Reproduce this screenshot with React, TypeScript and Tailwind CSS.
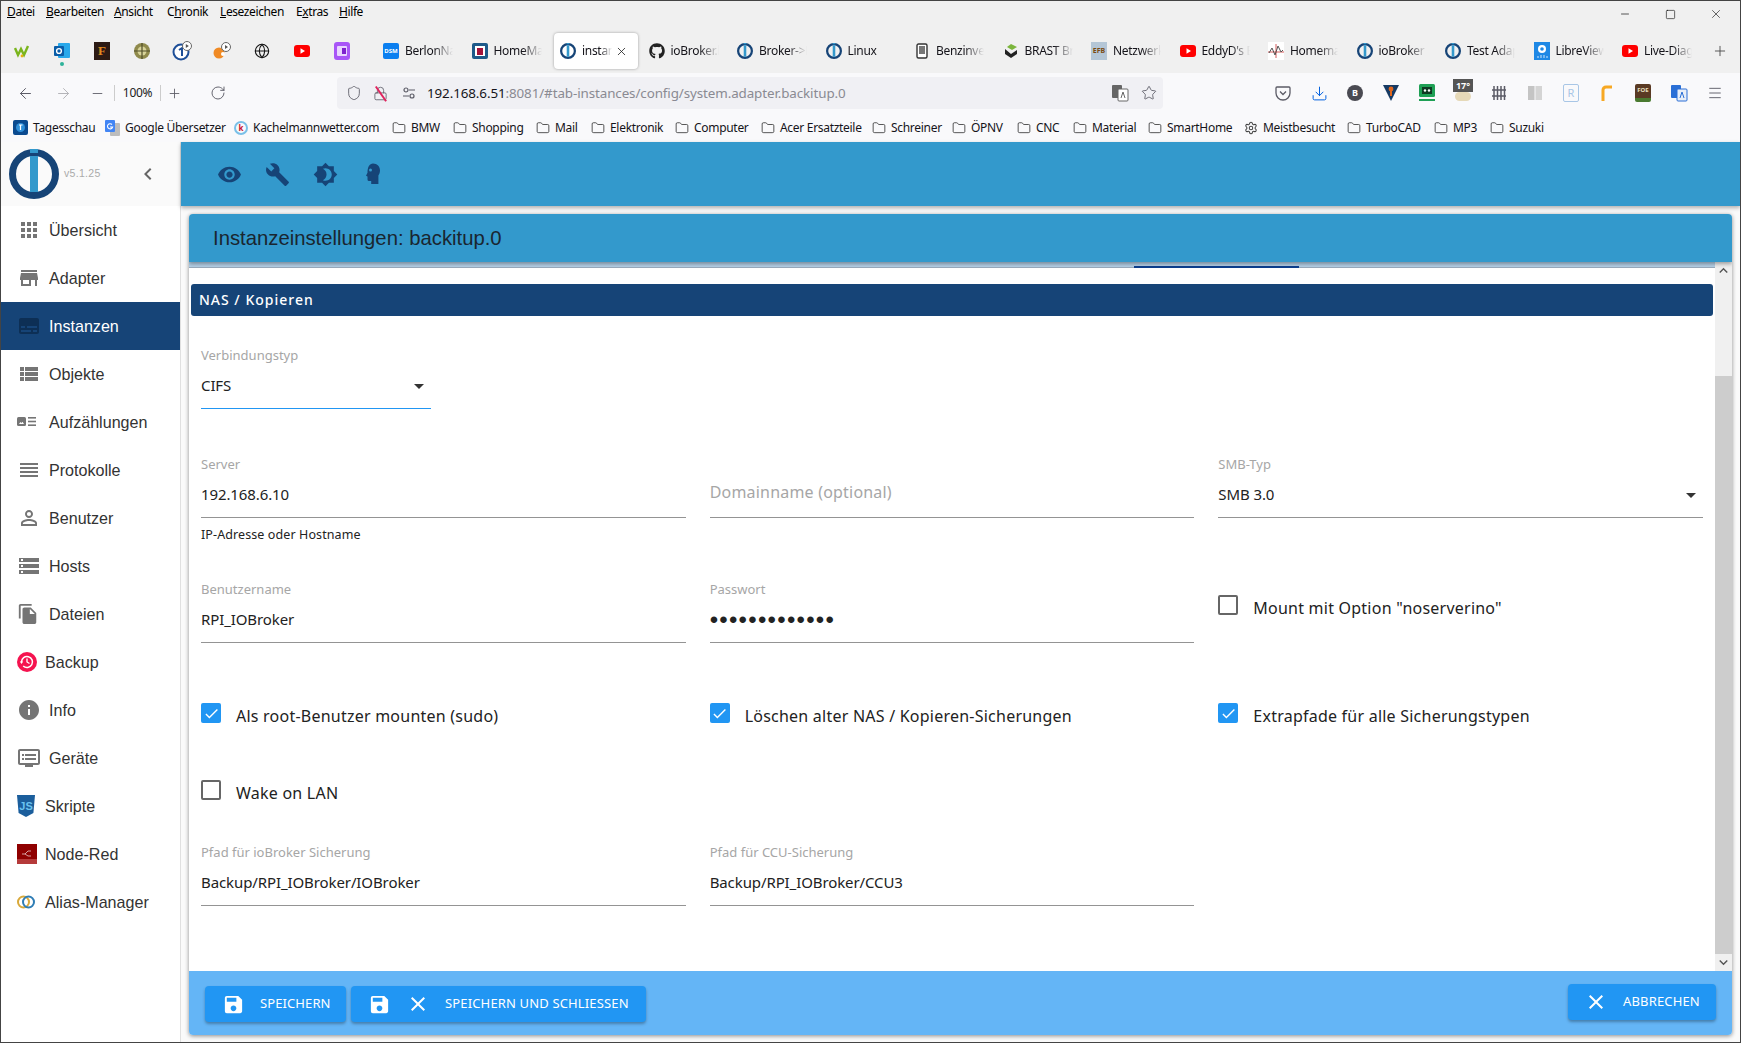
import { ArrowLeft, ArrowRight, Minus, Plus, RotateCw, Shield, Lock, Star, Download, Menu, Folder, Settings, X, Square, Globe } from 'lucide-react';
import { FaGithub } from 'react-icons/fa';
import {
  MdApps, MdStore, MdSubtitles, MdViewList, MdStorage, MdFileCopy, MdInfo, MdDvr, MdPersonOutline, MdReorder,
  MdVisibility, MdBuild, MdBrightness4, MdSave, MdClose, MdArrowDropDown, MdChevronLeft, MdCheck, MdKeyboardArrowUp, MdKeyboardArrowDown,
} from 'react-icons/md';

const chromeFont = "font-['Noto_Sans',sans-serif]";
const formFont = "font-['Noto_Sans',sans-serif]";

function IoLogo({ size = 16 }: { size?: number }) {
  return (
    <svg width={size} height={size} viewBox="0 0 50 50">
      <circle cx="25" cy="25" r="21.5" fill="none" stroke="#164477" strokeWidth="7" />
      <rect x="21" y="0" width="8" height="4" fill="#3399cc" />
      <rect x="21" y="7" width="8" height="36" fill="#3399cc" />
    </svg>
  );
}

function Yt() {
  return (
    <svg width="16" height="16" viewBox="0 0 16 16">
      <rect x="0" y="2" width="16" height="12" rx="3" fill="#f00" />
      <path d="M6.5 5.2 11 8l-4.5 2.8z" fill="#fff" />
    </svg>
  );
}

function TabIcon({ kind }: { kind: string }) {
  if (kind === 'io') return <IoLogo />;
  if (kind === 'yt') return <Yt />;
  if (kind === 'gh') return <FaGithub size={16} color="#222" />;
  if (kind === 'dsm')
    return <div className="w-4 h-4 bg-[#0b7ff0] rounded-[2px] text-white text-[6px] leading-4 text-center font-bold">DSM</div>;
  if (kind === 'home')
    return (
      <svg width="16" height="16" viewBox="0 0 16 16">
        <rect width="16" height="16" rx="2" fill="#1d5a8a" />
        <rect x="3" y="3" width="10" height="10" fill="#fff" />
        <rect x="5" y="5" width="6" height="7" fill="#a3123a" />
      </svg>
    );
  if (kind === 'benzin')
    return (
      <svg width="16" height="16" viewBox="0 0 16 16">
        <rect x="3" y="1" width="10" height="14" rx="1.5" fill="#fff" stroke="#333" strokeWidth="1.4" />
        <rect x="5" y="3" width="6" height="8" fill="#777" />
      </svg>
    );
  if (kind === 'brast')
    return (
      <svg width="16" height="16" viewBox="0 0 16 16">
        <path d="M8 1 14 4 9 7 4 4z" fill="#7bb53c" />
        <path d="M2 6 2 11 8 15 14 11 14 7 8 11z" fill="#222" />
      </svg>
    );
  if (kind === 'efb')
    return <div className="w-4 h-[18px] bg-[#b4c6d6] text-[#7a4a10] text-[7px] leading-[18px] text-center font-bold">EFB</div>;
  if (kind === 'h24')
    return (
      <svg width="16" height="18" viewBox="0 0 16 18">
        <rect width="16" height="18" fill="#fff" />
        <path d="M0 10h16M8 2v14" stroke="#c33" strokeWidth="0.8" />
        <path d="M1 11l3-5 3 7 3-9 3 6 2-2" fill="none" stroke="#555" strokeWidth="1" />
      </svg>
    );
  if (kind === 'libre')
    return (
      <svg width="16" height="18" viewBox="0 0 16 18">
        <rect width="16" height="18" fill="#1e88e5" />
        <circle cx="8" cy="7" r="4" fill="#fff" />
        <circle cx="8" cy="7" r="1.8" fill="#1e88e5" />
        <path d="M4 16v-2M7 16v-3M10 16v-3M13 16v-2" stroke="#cfe6fb" strokeWidth="1" />
      </svg>
    );
  return null;
}

const pinned = [
  <svg key="w" width="16" height="16" viewBox="0 0 16 16"><path d="M1 5l3 7 3-6 3 6 4-9" fill="none" stroke="#7ab51d" strokeWidth="2.4" /><circle cx="8" cy="13" r="1.4" fill="#e8b010" /></svg>,
  <div key="o" className="relative"><svg width="18" height="18" viewBox="0 0 18 18"><rect x="5" y="1" width="12" height="15" rx="1" fill="#28a8ea" /><rect x="1" y="4" width="10" height="10" rx="1" fill="#0a5da8" /><circle cx="6" cy="9" r="2.4" fill="none" stroke="#fff" strokeWidth="1.4" /></svg><span className="absolute left-[7px] top-[20px] w-1 h-1 rounded-full bg-[#2fb39a]" /></div>,
  <div key="f" className="w-4 h-[18px] bg-[#2c1a14] text-[#e08a20] text-[13px] leading-[18px] text-center font-bold font-['Liberation_Serif',serif]">F</div>,
  <svg key="g" width="18" height="18" viewBox="0 0 18 18"><circle cx="9" cy="9" r="8" fill="#8f8a4c" /><circle cx="9" cy="9" r="4.5" fill="#d8d49a" /><path d="M9 1v16M1 9h16" stroke="#514f2a" strokeWidth="1.2" /></svg>,
  <svg key="p1" width="20" height="20" viewBox="0 0 20 20"><circle cx="9" cy="11" r="7.5" fill="#fff" stroke="#1e4f98" strokeWidth="2" /><path d="M7 9l3-2v8" fill="none" stroke="#1e4f98" strokeWidth="2" /><circle cx="15" cy="5" r="4.5" fill="#fff" stroke="#666" /><path d="M13.8 3l3 2-3 2z" fill="#555" /></svg>,
  <svg key="p2" width="20" height="20" viewBox="0 0 20 20"><circle cx="7" cy="12" r="5.5" fill="#f08a24" /><circle cx="11" cy="13" r="2" fill="#fff" /><circle cx="14" cy="6" r="4.5" fill="#fff" stroke="#666" /><path d="M13 4l3 2-3 2z" fill="#555" /></svg>,
  <Globe key="gl" size={16} color="#111" strokeWidth={1.6} />,
  <Yt key="y" />,
  <svg key="pu" width="16" height="18" viewBox="0 0 16 18"><rect width="16" height="18" rx="3" fill="#a855f7" /><rect x="3" y="4" width="10" height="10" rx="1" fill="#e9d5ff" /><rect x="8" y="6" width="4" height="6" fill="#7e22ce" /></svg>,
];

const tabs = [
  { icon: 'dsm', label: 'BerlonNas' },
  { icon: 'home', label: 'HomeMatic' },
  { icon: 'io', label: 'instanzen', active: true },
  { icon: 'gh', label: 'ioBroker.backitup' },
  { icon: 'io', label: 'Broker->Forum' },
  { icon: 'io', label: 'Linux' },
  { icon: 'benzin', label: 'Benzinvergleich' },
  { icon: 'brast', label: 'BRAST Bremse' },
  { icon: 'efb', label: 'Netzwerk' },
  { icon: 'yt', label: "EddyD's Blog" },
  { icon: 'h24', label: 'Homematic' },
  { icon: 'io', label: 'ioBroker' },
  { icon: 'io', label: 'Test Adapter' },
  { icon: 'libre', label: 'LibreView' },
  { icon: 'yt', label: 'Live-Diagramm' },
];

const folders = [
  { label: 'BMW', w: 'w-[61px]' },
  { label: 'Shopping', w: 'w-[83px]' },
  { label: 'Mail', w: 'w-[55px]' },
  { label: 'Elektronik', w: 'w-[84px]' },
  { label: 'Computer', w: 'w-[86px]' },
  { label: 'Acer Ersatzteile', w: 'w-[111px]' },
  { label: 'Schreiner', w: 'w-[80px]' },
  { label: 'ÖPNV', w: 'w-[65px]' },
  { label: 'CNC', w: 'w-[56px]' },
  { label: 'Material', w: 'w-[75px]' },
  { label: 'SmartHome', w: 'w-[96px]' },
];

const folders2 = [
  { label: 'TurboCAD', w: 'w-[87px]' },
  { label: 'MP3', w: 'w-[56px]' },
  { label: 'Suzuki', w: 'w-[60px]' },
];

function Bookmark({ label, w, icon }: { label: string; w: string; icon?: React.ReactNode }) {
  return (
    <div className={`${w} flex items-center gap-[5px] shrink-0`}>
      {icon ?? <Folder size={14} strokeWidth={1.3} color="#222" className="shrink-0" />}
      <span className="text-[12px] tracking-[-0.3px] text-[#15141a] whitespace-nowrap">{label}</span>
    </div>
  );
}

function ToolIcon({ children }: { children: React.ReactNode }) {
  return <div className="w-[36px] h-[32px] flex items-center justify-center shrink-0">{children}</div>;
}

function BrowserChrome() {
  return (
    <div className={`${chromeFont} shrink-0`}>
      <div className="h-[72px] bg-[#f0f0f0] flex flex-col">
        <div className="h-[21px] shrink-0 flex items-center justify-between">
          <div className="flex text-[12px] tracking-[-0.4px] text-black pl-[6px]">
            <span className="w-[39px]"><u>D</u>atei</span>
            <span className="w-[68px]"><u>B</u>earbeiten</span>
            <span className="w-[53px]"><u>A</u>nsicht</span>
            <span className="w-[53px]">C<u>h</u>ronik</span>
            <span className="w-[76px]"><u>L</u>esezeichen</span>
            <span className="w-[43px]">E<u>x</u>tras</span>
            <span><u>H</u>ilfe</span>
          </div>
          <div className="flex items-center text-black pr-[17px] mt-[5px]">
            <Minus size={12} strokeWidth={1.3} className="mr-[34px]" />
            <Square size={11} strokeWidth={1.3} className="mr-[33px]" />
            <X size={14} strokeWidth={1} />
          </div>
        </div>
        <div className="h-[36px] mt-[11px] shrink-0 flex items-center pl-[1px]">
          {pinned.map((icon, i) => (
            <div key={i} className="w-[40px] h-[36px] flex items-center justify-center shrink-0">{icon}</div>
          ))}
          <div className="w-[15px] shrink-0" />
          {tabs.map((t) => (
            <div
              key={t.label}
              className={`w-[84px] mr-[4.5px] h-[36px] shrink-0 flex items-center pl-[6px] gap-[6px] rounded-[4px] relative ${t.active ? 'bg-white shadow-[0_0_3px_rgba(0,0,0,0.35)]' : ''}`}
            >
              <div className="w-4 flex justify-center shrink-0"><TabIcon kind={t.icon} /></div>
              <span className={`text-[12px] text-[#15141a] tracking-[-0.3px] whitespace-nowrap overflow-hidden ${t.active ? 'w-[30px]' : 'w-[48px]'} [mask-image:linear-gradient(to_right,black_60%,transparent)]`}>
                {t.label}
              </span>
              {t.active && <X size={13} strokeWidth={1.5} color="#222" className="absolute right-[10px]" />}
            </div>
          ))}
          <Plus size={16} strokeWidth={1.3} color="#444" className="ml-[7px]" />
        </div>
      </div>
      <div className="h-[40px] bg-[#f9f9fb] flex items-center text-[#5b5b66]">
        <ArrowLeft size={17} strokeWidth={1.4} className="ml-[16px]" />
        <ArrowRight size={17} strokeWidth={1.4} color="#b4b4b8" className="ml-[21px]" />
        <Minus size={15} strokeWidth={1.4} className="ml-[18px]" />
        <div className="w-px h-[16px] bg-[#ccc] ml-[9px]" />
        <span className="w-[45px] text-center text-[12px] tracking-[-0.3px] text-[#222]">100%</span>
        <div className="w-px h-[16px] bg-[#ccc]" />
        <Plus size={15} strokeWidth={1.4} className="ml-[6px]" />
        <RotateCw size={16} strokeWidth={1.4} className="ml-[28px]" />
        <div className="ml-[111px] w-[826px] h-[32px] bg-[#f0f0f4] rounded-[4px] flex items-center">
          <Shield size={16} strokeWidth={1.3} className="ml-[9px]" />
          <div className="relative ml-[11px]">
            <Lock size={15} strokeWidth={1.3} />
            <div className="absolute left-[7px] -top-[1px] w-[1.5px] h-[18px] bg-[#e0245e] -rotate-[35deg]" />
          </div>
          <svg width="16" height="16" viewBox="0 0 16 16" className="ml-[13px]" fill="none" stroke="#5b5b66" strokeWidth="1.2">
            <path d="M8 5h6M2 11h6" />
            <circle cx="5" cy="5" r="2" />
            <circle cx="11" cy="11" r="2" />
          </svg>
          <span className="ml-[10px] mt-[1px] text-[13.4px] tracking-[-0.1px] text-[#15141a] whitespace-nowrap">
            192.168.6.51<span className="text-[#8a8a92]">:8081/#tab-instances/config/system.adapter.backitup.0</span>
          </span>
          <div className="ml-auto flex items-center gap-[12px] pr-[6px]">
            <svg width="18" height="18" viewBox="0 0 18 18">
              <rect x="1" y="1" width="10" height="13" rx="1" fill="#666" />
              <rect x="7" y="5" width="10" height="12" rx="1" fill="#fff" stroke="#666" />
              <path d="M10 14l2-6 2 6" fill="none" stroke="#666" />
            </svg>
            <Star size={16} strokeWidth={1.3} />
          </div>
        </div>
        <div className="ml-[102px] flex items-center">
          <ToolIcon><svg width="16" height="16" viewBox="0 0 16 16" fill="none" stroke="#5b5b66" strokeWidth="1.3"><path d="M2 2h12a1 1 0 0 1 1 1v5a7 7 0 0 1-14 0V3a1 1 0 0 1 1-1z" /><path d="M5 6.5 8 9.5 11 6.5" /></svg></ToolIcon>
          <ToolIcon><Download size={17} strokeWidth={1.4} color="#0060df" /></ToolIcon>
          <ToolIcon><div className="w-4 h-4 rounded-full bg-[#4a4a52] text-white text-[9px] leading-4 text-center font-bold">B</div></ToolIcon>
          <ToolIcon><svg width="16" height="18" viewBox="0 0 16 18"><path d="M0 1h16L8 17z" fill="#173a63" /><circle cx="8" cy="5" r="2.4" fill="#e0661b" /><rect x="7" y="5" width="2" height="7" fill="#e0661b" /></svg></ToolIcon>
          <ToolIcon><svg width="16" height="18" viewBox="0 0 16 18"><rect width="16" height="13" rx="1.5" fill="#1fa055" /><rect x="3" y="3" width="10" height="7" fill="#0f3a22" /><circle cx="6" cy="6.5" r="1.2" fill="#fff" /><circle cx="10" cy="6.5" r="1.2" fill="#fff" /><rect y="15" width="16" height="2" fill="#1fa055" /></svg></ToolIcon>
          <ToolIcon>
            <div className="flex flex-col items-center -mt-[6px]">
              <div className="w-[20px] h-[13px] bg-[#555] text-white text-[9px] leading-[13px] text-center font-bold">17°</div>
              <div className="w-[16px] h-[9px] bg-[#e6d9b8] rounded-full" />
            </div>
          </ToolIcon>
          <ToolIcon><svg width="16" height="16" viewBox="0 0 16 16" stroke="#5b5b66" strokeWidth="1.5"><path d="M3 1v14M6.5 1v14M10 1v14M13.5 1v14M1 5h14M1 11h14" /></svg></ToolIcon>
          <ToolIcon><svg width="16" height="16" viewBox="0 0 16 16"><rect x="1" y="1" width="6.5" height="14" fill="#c4c4c4" /><rect x="8.5" y="1" width="6.5" height="14" fill="#d4d4d4" /></svg></ToolIcon>
          <ToolIcon><div className="w-[16px] h-[18px] rounded-[2px] border border-[#a8c6e6] text-[#a8c6e6] text-[11px] leading-[16px] text-center">R</div></ToolIcon>
          <ToolIcon><svg width="14" height="18" viewBox="0 0 14 18" fill="none" stroke="#f7a823" strokeWidth="3"><path d="M3 17V6a3 3 0 0 1 3-3h6" /></svg></ToolIcon>
          <ToolIcon><div className="w-[16px] h-[18px] rounded-[2px] bg-[#5a3a24] text-[#e8e0c0] text-[6px] leading-[12px] text-center font-bold border-b-[4px] border-[#4a7a30]">FOE</div></ToolIcon>
          <ToolIcon><svg width="18" height="18" viewBox="0 0 18 18"><rect x="1" y="1" width="10" height="13" rx="1" fill="#2a6fd6" /><rect x="7" y="5" width="10" height="12" rx="1" fill="#e8eef8" stroke="#2a6fd6" /><path d="M10 14l2-6 2 6" fill="none" stroke="#2a6fd6" /></svg></ToolIcon>
          <ToolIcon><Menu size={16} strokeWidth={1.4} /></ToolIcon>
        </div>
      </div>
      <div className="h-[29px] bg-[#f9f9fb] flex items-center pl-[12px]">
        <Bookmark label="Tagesschau" w="w-[92px]" icon={<svg width="15" height="15" viewBox="0 0 15 15" className="shrink-0"><rect width="15" height="15" rx="2" fill="#0a4a8f" /><circle cx="7.5" cy="7.5" r="4.5" fill="#2f8fd8" /><path d="M6 5h3.5M7.5 5v5" stroke="#fff" strokeWidth="1.2" /></svg>} />
        <Bookmark label="Google Übersetzer" w="w-[129px]" icon={<svg width="15" height="16" viewBox="0 0 15 16" className="shrink-0"><rect x="5" y="3" width="10" height="13" rx="1" fill="#bdbdbd" /><rect x="0" y="0" width="10" height="12" rx="1" fill="#4285f4" /><path d="M7 4.5A2.6 2.6 0 1 0 7.6 7H5" fill="none" stroke="#fff" strokeWidth="1.1" /></svg>} />
        <Bookmark label="Kachelmannwetter.com" w="w-[158px]" icon={<div className="w-[14px] h-[14px] rounded-full border-2 border-[#7ac0e8] text-[#c8102e] text-[8px] leading-[10px] text-center font-bold shrink-0">k</div>} />
        {folders.map((f) => <Bookmark key={f.label} label={f.label} w={f.w} />)}
        <Bookmark label="Meistbesucht" w="w-[103px]" icon={<Settings size={14} strokeWidth={1.8} color="#444" className="shrink-0" />} />
        {folders2.map((f) => <Bookmark key={f.label} label={f.label} w={f.w} />)}
      </div>
    </div>
  );
}

function BackupIcon() {
  return (
    <svg width="20" height="20" viewBox="0 0 20 20" className="shrink-0">
      <circle cx="10" cy="10" r="10" fill="#f5134f" />
      <path d="M4.5 10a5.5 5.5 0 1 1 1.7 4" fill="none" stroke="#fff" strokeWidth="1.5" />
      <path d="M2.8 9.5h3.4L4.5 12z" fill="#fff" />
      <path d="M10 6.5V10l2.5 1.5" fill="none" stroke="#fff" strokeWidth="1.3" />
    </svg>
  );
}

function EnumIcon() {
  return (
    <svg width="20" height="20" viewBox="0 0 20 20" fill="#757575">
      <rect x="0" y="5" width="9" height="9" rx="1.5" />
      <path d="M2 12l1.5-2 1 1 1-1.2L7 12z" fill="#fff" />
      <rect x="11" y="5" width="8" height="1.6" />
      <rect x="11" y="8.7" width="8" height="1.6" />
      <rect x="11" y="12.4" width="8" height="1.6" />
    </svg>
  );
}

function JsIcon() {
  return (
    <svg width="18" height="22" viewBox="0 0 18 22" className="shrink-0">
      <path d="M0 0h18l-1.6 18L9 22l-7.4-4z" fill="#1b5e9c" />
      <text x="9" y="15" textAnchor="middle" fontSize="11" fontWeight="700" fill="#6bc3f0" fontFamily="Liberation Sans, sans-serif">JS</text>
    </svg>
  );
}

function NodeRedIcon() {
  return (
    <svg width="20" height="20" viewBox="0 0 20 20" className="shrink-0">
      <rect width="20" height="20" fill="#8f0000" />
      <rect y="15" width="20" height="5" fill="#b53a3a" />
      <path d="M5 10h3l3-3h3M8 10l3 2h3" fill="none" stroke="#e8c8c8" strokeWidth="0.8" />
    </svg>
  );
}

function AliasIcon() {
  return (
    <svg width="18" height="16" viewBox="0 0 18 16" className="shrink-0">
      <circle cx="6.5" cy="8" r="5.5" fill="none" stroke="#d9a93a" strokeWidth="2" />
      <circle cx="11.5" cy="8" r="5.5" fill="none" stroke="#2f7db5" strokeWidth="2" />
    </svg>
  );
}

const navItems: { label: string; icon: React.ReactNode; narrow?: boolean; active?: boolean }[] = [
  { label: 'Übersicht', icon: <MdApps size={24} /> },
  { label: 'Adapter', icon: <MdStore size={24} /> },
  { label: 'Instanzen', icon: <MdSubtitles size={24} color="#0d2f55" />, active: true },
  { label: 'Objekte', icon: <MdViewList size={24} /> },
  { label: 'Aufzählungen', icon: <EnumIcon /> },
  { label: 'Protokolle', icon: <MdReorder size={24} /> },
  { label: 'Benutzer', icon: <MdPersonOutline size={24} /> },
  { label: 'Hosts', icon: <MdStorage size={24} /> },
  { label: 'Dateien', icon: <MdFileCopy size={22} /> },
  { label: 'Backup', icon: <BackupIcon />, narrow: true },
  { label: 'Info', icon: <MdInfo size={24} /> },
  { label: 'Geräte', icon: <MdDvr size={24} /> },
  { label: 'Skripte', icon: <JsIcon />, narrow: true },
  { label: 'Node-Red', icon: <NodeRedIcon />, narrow: true },
  { label: 'Alias-Manager', icon: <AliasIcon />, narrow: true },
];

function Sidebar() {
  return (
    <aside className="w-[180px] shrink-0 bg-white border-r border-[#e0e0e0] flex flex-col font-['Liberation_Sans',sans-serif]">
      <div className="h-[64px] bg-[#fafafa] flex items-center relative shrink-0">
        <div className="ml-[8px]"><IoLogo size={50} /></div>
        <span className="ml-[5px] text-[10.5px] tracking-[0.3px] text-[#aaa]">v5.1.25</span>
        <MdChevronLeft size={24} color="#666" className="absolute left-[135px]" />
      </div>
      {navItems.map((n) => (
        <div
          key={n.label}
          className={`h-[48px] shrink-0 flex items-center pl-[16px] ${n.active ? 'bg-[#164477] text-white w-[179px]' : 'text-[#333]'}`}
        >
          <div className={`${n.narrow ? 'w-[28px]' : 'w-[32px]'} shrink-0 text-[#757575] flex items-center`}>{n.icon}</div>
          <span className="text-[16.1px]">{n.label}</span>
        </div>
      ))}
    </aside>
  );
}

function Field({ label, value, placeholder, password, select, className = '' }: {
  label?: string; value?: string; placeholder?: string; password?: boolean; select?: boolean; className?: string;
}) {
  return (
    <div className={className}>
      <div className="h-[16px] text-[13px] leading-[16px] text-[#a6a6a6]">{label}</div>
      <div className="h-[46px] border-b border-[#949494] flex items-center justify-between">
        {placeholder ? (
          <span className="text-[16px] tracking-[0.2px] text-[#a6a6a6] -mt-[6px]">{placeholder}</span>
        ) : password ? (
          <span className="text-[24px] leading-none tracking-[1.25px] mt-[1px] text-[#222] font-['Liberation_Sans',sans-serif]">{value}</span>
        ) : (
          <span className="text-[15px] tracking-[-0.1px] text-[#222]">{value}</span>
        )}
        {select && <MdArrowDropDown size={24} color="#333" />}
      </div>
    </div>
  );
}

function Check({ label, checked, className = '' }: { label: string; checked?: boolean; className?: string }) {
  return (
    <div className={`flex items-center h-[20px] ${className}`}>
      {checked ? (
        <div className="w-[20px] h-[20px] rounded-[2px] bg-[#2196f3] flex items-center justify-center shrink-0">
          <MdCheck size={17} color="#fff" />
        </div>
      ) : (
        <div className="w-[20px] h-[20px] rounded-[2px] border-2 border-[#666] shrink-0" />
      )}
      <span className="ml-[15px] mt-[5px] text-[16px] tracking-[0.23px] text-[#222] whitespace-nowrap">{label}</span>
    </div>
  );
}

function Dialog() {
  return (
    <div className="mx-[8px] mt-[8px] mb-[7px] flex-1 min-h-0 flex flex-col rounded-[4px] bg-white shadow-[0_1px_4px_rgba(0,0,0,0.45)] overflow-hidden">
      <div className="h-[48px] shrink-0 bg-[#3399cc] flex items-center pl-[24px] text-[20.3px] text-[#1a2630] font-['Liberation_Sans',sans-serif] shadow-[0_2px_4px_rgba(0,0,0,0.35)] relative z-10">
        Instanzeinstellungen: backitup.0
      </div>
      <div className="flex-1 min-h-0 flex">
        <div className={`flex-1 min-w-0 ${formFont}`}>
          <div className="h-[6px] bg-[#b5d1e8] flex border-b border-[#9ab]">
            <div className="ml-[945px] w-[165px] h-[2px] mt-[4px] bg-[#0d3f8f]" />
          </div>
          <div className="mt-[16px] ml-[2px] mr-[2px] h-[32px] bg-[#164477] rounded-[3px] flex items-center pl-[8px] pb-[2px] text-[14px] tracking-[1px] text-white font-medium">
            NAS / Kopieren
          </div>
          <div className="px-[12px] pt-[31px]">
            <Field label="Verbindungstyp" value="CIFS" select className="w-[230px] [&>div:last-child]:border-[#2196f3]" />
            <div className="grid grid-cols-3 gap-x-6 mt-[47px]">
              <div>
                <Field label="Server" value="192.168.6.10" />
                <div className="mt-[9px] h-[16px] text-[12.5px] tracking-[0.1px] leading-[16px] text-[#222]">IP-Adresse oder Hostname</div>
              </div>
              <Field placeholder="Domainname (optional)" />
              <Field label="SMB-Typ" value="SMB 3.0" select />
            </div>
            <div className="grid grid-cols-3 gap-x-6 mt-[38px]">
              <Field label="Benutzername" value="RPI_IOBroker" />
              <Field label="Passwort" value="•••••••••••••" password />
              <Check label={'Mount mit Option "noserverino"'} className="mt-[14px]" />
            </div>
            <div className="grid grid-cols-3 gap-x-6 mt-[60px]">
              <Check label="Als root-Benutzer mounten (sudo)" checked />
              <Check label="Löschen alter NAS / Kopieren-Sicherungen" checked />
              <Check label="Extrapfade für alle Sicherungstypen" checked />
            </div>
            <Check label="Wake on LAN" className="mt-[57px]" />
            <div className="grid grid-cols-3 gap-x-6 mt-[44px]">
              <Field label="Pfad für ioBroker Sicherung" value="Backup/RPI_IOBroker/IOBroker" />
              <Field label="Pfad für CCU-Sicherung" value="Backup/RPI_IOBroker/CCU3" />
            </div>
          </div>
        </div>
        <div className="w-[17px] shrink-0 bg-[#f0f0f0] flex flex-col items-center">
          <MdKeyboardArrowUp size={17} color="#555" className="shrink-0" />
          <div className="h-[97px] shrink-0" />
          <div className="flex-1 w-full bg-[#cdcdcd]" />
          <MdKeyboardArrowDown size={17} color="#555" className="shrink-0" />
        </div>
      </div>
      <div className={`h-[64px] shrink-0 bg-[#64b5f6] flex items-center justify-between pl-[16px] pr-[16px] ${formFont}`}>
        <div className="flex gap-[5px] mt-[2px]">
          <button className="w-[141px] h-[36px] rounded-[4px] bg-[#2196f3] shadow-[0_2px_3px_rgba(0,0,0,0.3)] flex items-center pl-[17px] text-white text-[13px] tracking-[0.1px]">
            <MdSave size={23} />
            <span className="ml-[15px]">SPEICHERN</span>
          </button>
          <button className="w-[295px] h-[36px] rounded-[4px] bg-[#2196f3] shadow-[0_2px_3px_rgba(0,0,0,0.3)] flex items-center pl-[17px] text-white text-[13px] tracking-[0.15px]">
            <MdSave size={23} />
            <MdClose size={24} className="ml-[15px]" />
            <span className="ml-[15px]">SPEICHERN UND SCHLIESSEN</span>
          </button>
        </div>
        <button className="w-[148px] h-[36px] -mt-[2px] rounded-[4px] bg-[#2196f3] shadow-[0_2px_3px_rgba(0,0,0,0.3)] flex items-center pl-[16px] text-white text-[13px] tracking-[0.15px]">
          <MdClose size={24} />
          <span className="ml-[15px]">ABBRECHEN</span>
        </button>
      </div>
    </div>
  );
}

export default function App() {
  return (
    <div className="h-screen w-full border border-[#444] flex flex-col overflow-hidden bg-white">
      <BrowserChrome />
      <div className="flex-1 min-h-0 flex">
        <Sidebar />
        <main className="flex-1 min-w-0 flex flex-col bg-[#fafafa]">
          <div className="h-[64px] shrink-0 bg-[#3399cc] flex items-center pl-[24px] text-[#164477] shadow-[0_2px_4px_rgba(0,0,0,0.3)] relative z-10">
            <div className="w-[48px] flex justify-center"><MdVisibility size={25} /></div>
            <div className="w-[48px] flex justify-center"><MdBuild size={25} /></div>
            <div className="w-[48px] flex justify-center"><MdBrightness4 size={25} /></div>
            <div className="w-[48px] flex justify-center">
              <svg width="24" height="24" viewBox="0 0 24 24" fill="currentColor">
                <path d="M12 1.5c4.3 0 7 3 7 7 0 2.4-.9 3.8-1.6 5v8.5h-7.2v-3H8a1.5 1.5 0 0 1-1.5-1.5v-3l-1.5-.7 1.5-3C6.5 5 8.5 1.5 12 1.5z" />
                <circle cx="9.5" cy="8" r="1.5" fill="#3399cc" />
              </svg>
            </div>
          </div>
          <Dialog />
        </main>
      </div>
    </div>
  );
}
